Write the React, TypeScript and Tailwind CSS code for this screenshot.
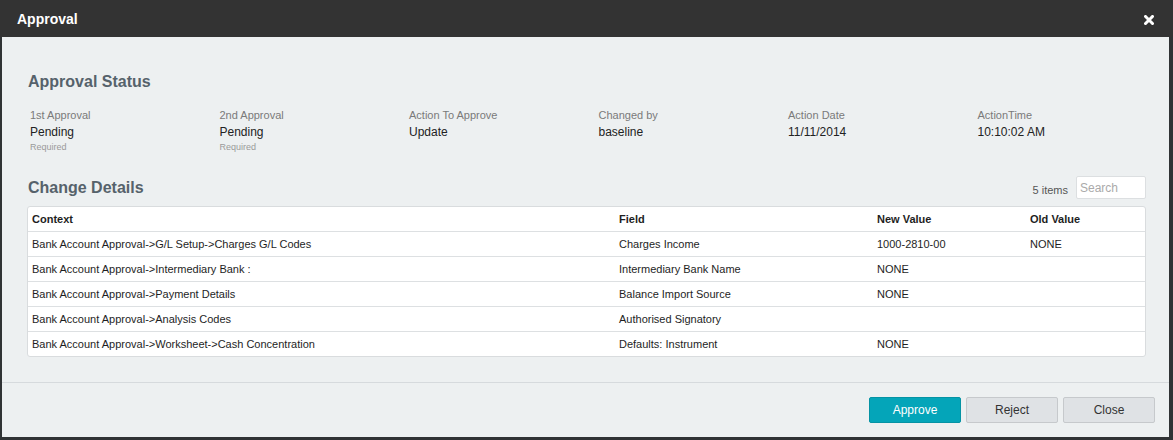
import React from 'react';

const statusItems = [
  { label: '1st Approval', value: 'Pending', note: 'Required' },
  { label: '2nd Approval', value: 'Pending', note: 'Required' },
  { label: 'Action To Approve', value: 'Update' },
  { label: 'Changed by', value: 'baseline' },
  { label: 'Action Date', value: '11/11/2014' },
  { label: 'ActionTime', value: '10:10:02 AM' },
];

const rows = [
  ['Bank Account Approval->G/L Setup->Charges G/L Codes', 'Charges Income', '1000-2810-00', 'NONE'],
  ['Bank Account Approval->Intermediary Bank :', 'Intermediary Bank Name', 'NONE', ''],
  ['Bank Account Approval->Payment Details', 'Balance Import Source', 'NONE', ''],
  ['Bank Account Approval->Analysis Codes', 'Authorised Signatory', '', ''],
  ['Bank Account Approval->Worksheet->Cash Concentration', 'Defaults: Instrument', 'NONE', ''],
];

export default function App() {
  return (
    <div className="w-[1173px] h-[440px] bg-[#303335] flex flex-col font-['Liberation_Sans',Arial,sans-serif] overflow-hidden">
      {/* HEADER */}
      <div className="h-[37px] shrink-0 bg-[#333333] flex items-center justify-between pl-[17px] pr-[19px]">
        <h1 className="text-white text-[14px] font-bold leading-none">Approval</h1>
        <svg width="10" height="10" viewBox="0 0 10 10" className="mt-[2px]">
          <path d="M1.5 1.5 L8.5 8.5 M8.5 1.5 L1.5 8.5" stroke="white" strokeWidth="3" strokeLinecap="square" />
        </svg>
      </div>

      {/* BODY */}
      <div className="flex-1 ml-[2px] mr-[4px] mb-[3px] bg-[#edf0f1] flex flex-col">
        <div className="flex-1 pl-[25px] pr-[23px]">
          <h2 className="mt-[36px] ml-[1px] text-[16px] leading-[18px] font-bold text-[#56626b]">Approval Status</h2>

          <div className="mt-[18px] ml-[3px] grid grid-cols-[repeat(6,189.5px)]">
            {statusItems.map((s) => (
              <div key={s.label}>
                <div className="text-[11px] leading-[13px] text-[#7a7a7a]">{s.label}</div>
                <div className="mt-[2px] text-[12px] leading-[16px] text-[#222]">{s.value}</div>
                {s.note && <div className="mt-[2px] text-[9px] leading-[11px] text-[#9a9a9a]">{s.note}</div>}
              </div>
            ))}
          </div>

          <div className="mt-[23px] h-[23px] flex items-center justify-between">
            <h2 className="ml-[1px] text-[16px] leading-[18px] font-bold text-[#56626b]">Change Details</h2>
            <div className="flex items-center gap-[8px]">
              <span className="pt-[5px] text-[11px] leading-[13px] text-[#555]">5 items</span>
              <input
                placeholder="Search"
                className="w-[70px] h-[23px] bg-white border border-[#dcdfe1] rounded-[2px] px-[3px] text-[12px] text-[#333] placeholder:text-[#aaa] outline-none"
              />
            </div>
          </div>

          {/* TABLE */}
          <div className="mt-[7px] bg-white border border-[#d9dcde] rounded-[3px] text-[11px] text-[#1e1e1e]">
            <div className="h-[24px] grid grid-cols-[587px_258px_153px_1fr] items-center font-bold">
              <div className="pl-[4px]">Context</div>
              <div className="pl-[4px]">Field</div>
              <div className="pl-[4px]">New Value</div>
              <div className="pl-[4px]">Old Value</div>
            </div>
            {rows.map((r, i) => (
              <div key={i} className="h-[25px] border-t border-[#dde0e2] grid grid-cols-[587px_258px_153px_1fr] items-center">
                {r.map((c, j) => (
                  <div key={j} className="pl-[4px]">{c}</div>
                ))}
              </div>
            ))}
          </div>
        </div>

        {/* FOOTER */}
        <div className="shrink-0 border-t border-[#d6dadd] px-[14px] py-[14px] flex justify-end gap-[5px]">
          <button className="w-[92px] h-[26px] bg-[#04a5b9] border border-[#0593a4] rounded-[2px] text-white text-[12px]">
            Approve
          </button>
          <button className="w-[92px] h-[26px] bg-[#dfe2e5] border border-[#c6c9cc] rounded-[2px] text-[#333] text-[12px]">
            Reject
          </button>
          <button className="w-[92px] h-[26px] bg-[#dfe2e5] border border-[#c6c9cc] rounded-[2px] text-[#333] text-[12px]">
            Close
          </button>
        </div>
      </div>
    </div>
  );
}
